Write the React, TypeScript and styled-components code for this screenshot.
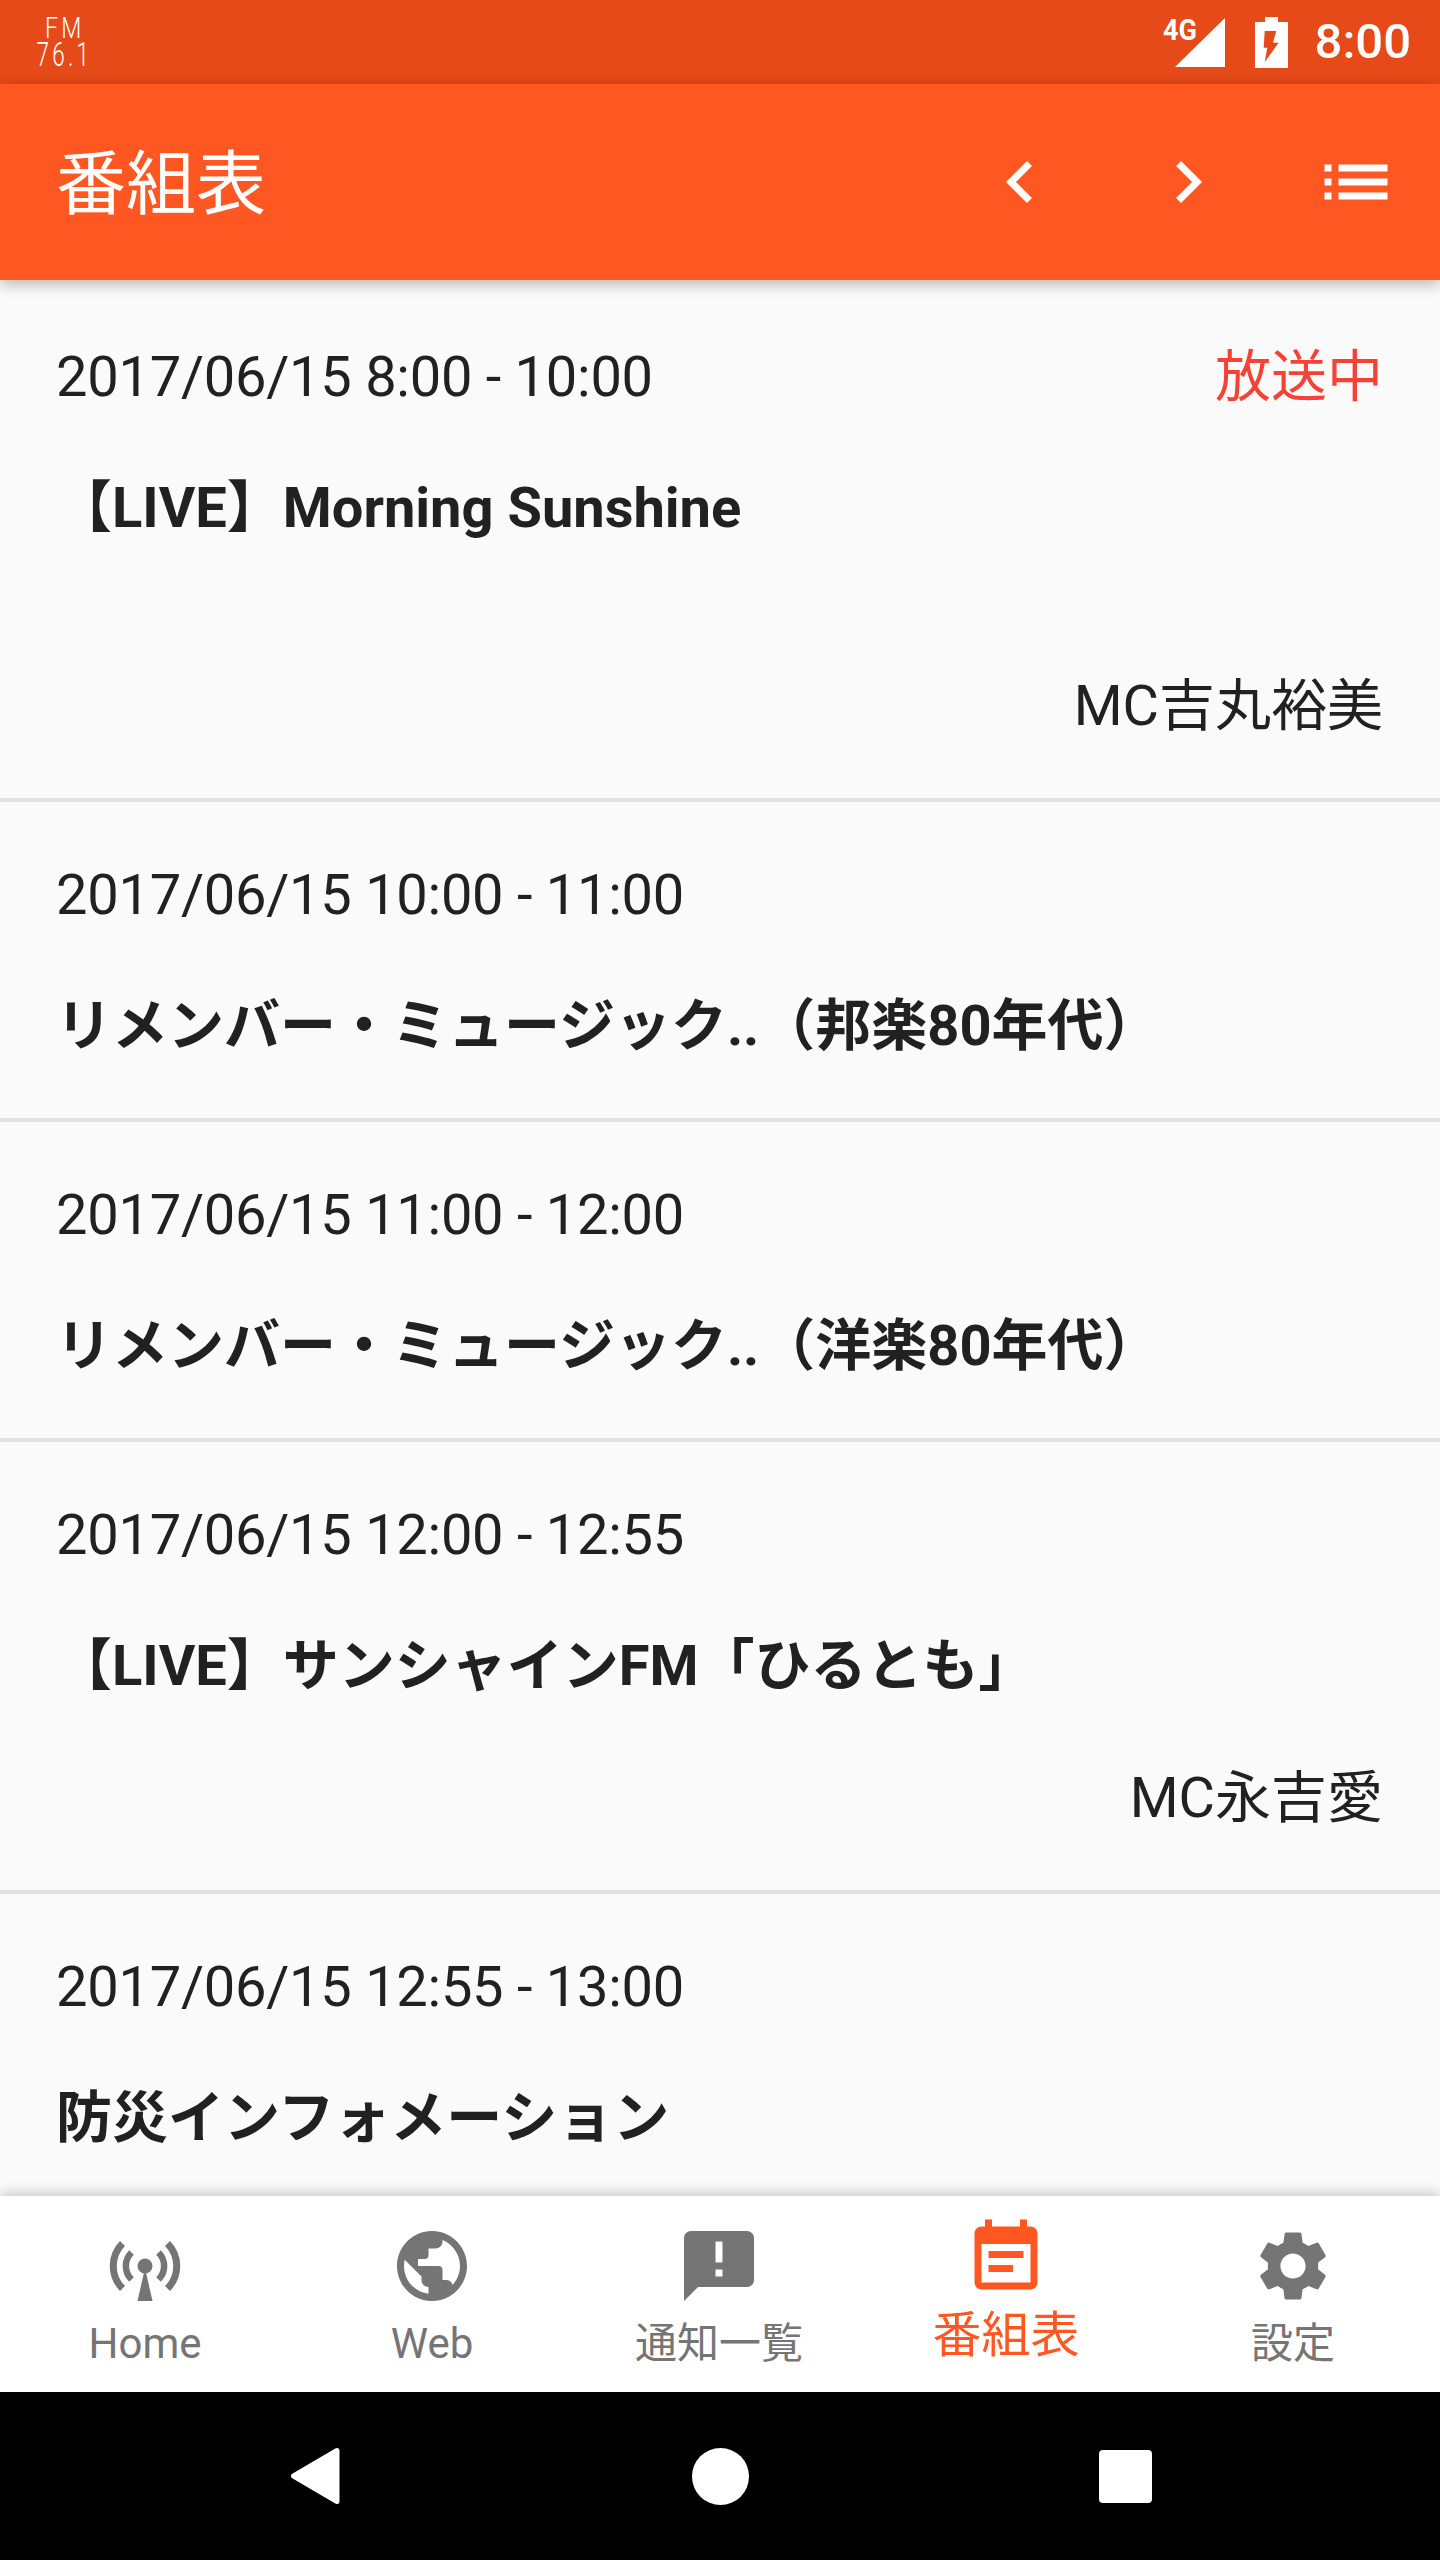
import React from "react";
import styled, { createGlobalStyle } from "styled-components";
import {
  MdAnnouncement,
  MdChevronLeft,
  MdChevronRight,
  MdEventNote,
  MdList,
  MdPublic,
  MdSettings,
} from "react-icons/md";

const GlobalStyle = createGlobalStyle`
  html, body {
    margin: 0;
    padding: 0;
    background: #000;
  }
  * {
    box-sizing: border-box;
  }
`;

const Screen = styled.div`
  width: 1440px;
  height: 2560px;
  display: flex;
  flex-direction: column;
  overflow: hidden;
  background: #fafafa;
  font-family: Roboto, "Noto Sans CJK JP", sans-serif;
  color: #212121;
`;

const StatusBar = styled.div`
  height: 84px;
  flex: none;
  display: flex;
  align-items: center;
  padding: 0 29px 0 39px;
  background: #e64a19;
  color: #fff;
`;

const FmBadge = styled.div`
  width: 51px;
  display: flex;
  flex-direction: column;
  align-items: center;
  font-family: Roboto, sans-serif;
  font-weight: 300;
`;

const FmTop = styled.span`
  font-size: 29px;
  line-height: 25px;
  letter-spacing: 4px;
  transform: scaleX(0.8);
`;

const FmBottom = styled.span`
  font-size: 34px;
  line-height: 27px;
  letter-spacing: 5px;
  white-space: nowrap;
  transform: scaleX(0.66);
`;

const StatusRight = styled.div`
  margin-left: auto;
  display: flex;
  align-items: center;
`;

const SignalWrap = styled.div`
  position: relative;
  width: 50px;
  height: 49px;
`;

const NetLabel = styled.span`
  position: absolute;
  left: -12px;
  top: -5px;
  font-size: 30px;
  line-height: 34px;
  font-weight: 700;
  transform: scaleX(0.9);
  transform-origin: left center;
`;

const Battery = styled.svg`
  width: 33px;
  height: 51px;
  margin-left: 30px;
  display: block;
`;

const Clock = styled.span`
  margin-left: 27px;
  font-size: 49px;
  font-weight: 500;
  line-height: 84px;
`;

const Toolbar = styled.header`
  position: relative;
  z-index: 2;
  height: 196px;
  flex: none;
  display: flex;
  align-items: center;
  padding-left: 56px;
  background: #ff5722;
  color: #fff;
  box-shadow: 0 4px 14px rgba(0, 0, 0, 0.28);
`;

const ToolbarTitle = styled.h1`
  margin: 6px 0 0;
  font-size: 70px;
  font-weight: 400;
  line-height: 190px;
`;

const ToolbarActions = styled.div`
  margin-left: auto;
  display: flex;
`;

const ActionButton = styled.div`
  width: 168px;
  height: 196px;
  display: flex;
  align-items: center;
  justify-content: center;
  font-size: 84px;
`;

const List = styled.main`
  flex: 1;
  min-height: 0;
  overflow: hidden;
`;

const Row = styled.section<{ $first?: boolean }>`
  padding: ${(p) => (p.$first ? "60px" : "56px")} 57px 59px 56px;
  border-bottom: 4px solid #e0e0e0;
`;

const RowHead = styled.div`
  display: flex;
  justify-content: space-between;
  align-items: center;
`;

const Time = styled.span`
  font-size: 56px;
  line-height: 74px;
  letter-spacing: -0.25px;
`;

const OnAir = styled.span`
  font-size: 56px;
  line-height: 74px;
  color: #f44336;
`;

const ProgramTitle = styled.div<{ $tall?: boolean }>`
  margin-top: 61px;
  min-height: ${(p) => (p.$tall ? "132px" : "66px")};
  font-size: 56px;
  line-height: 66px;
  font-weight: 700;
  white-space: nowrap;
`;

const Host = styled.div`
  margin-top: 66px;
  font-size: 56px;
  line-height: 66px;
  text-align: right;
`;

const TabBar = styled.nav`
  position: relative;
  z-index: 2;
  height: 196px;
  flex: none;
  display: grid;
  grid-template-columns: repeat(5, 287px);
  padding-left: 1.5px;
  background: #fff;
  box-shadow: 0 -3px 12px rgba(0, 0, 0, 0.2);
`;

const Tab = styled.div<{ $active?: boolean }>`
  display: flex;
  flex-direction: column;
  align-items: center;
  padding-top: ${(p) => (p.$active ? "20px" : "28px")};
  color: ${(p) => (p.$active ? "#ff5722" : "#757575")};
  font-size: 84px;
  line-height: 0;
`;

const TabLabel = styled.span<{ $active?: boolean }>`
  margin-top: 8px;
  font-size: ${(p) => (p.$active ? "49px" : "42px")};
  line-height: 56px;
  white-space: nowrap;
`;

const NavBar = styled.div`
  height: 168px;
  flex: none;
  display: grid;
  grid-template-columns: repeat(3, 405px);
  justify-content: center;
  align-items: center;
  justify-items: center;
  background: #000;
`;

const NavIcon = styled.svg`
  display: block;
`;

const HomeSquare = styled.div`
  width: 53px;
  height: 53px;
  border-radius: 4px;
  background: #fff;
`;

const HomeCircle = styled.div`
  width: 57px;
  height: 57px;
  border-radius: 50%;
  background: #fff;
`;

function TowerIcon() {
  return (
    <svg width="84" height="84" viewBox="0 0 84 84" fill="none">
      <circle cx="42" cy="42" r="7.5" fill="currentColor" />
      <path d="M42 44 L49.5 77 H34.5 Z" fill="currentColor" />
      <g stroke="currentColor">
        <path d="M28.5 28.5 A19 19 0 0 0 28.5 55.5" strokeWidth="6.5" />
        <path d="M55.5 28.5 A19 19 0 0 1 55.5 55.5" strokeWidth="6.5" />
        <path d="M19.5 19.5 A32 32 0 0 0 19.5 64.5" strokeWidth="7" />
        <path d="M64.5 19.5 A32 32 0 0 1 64.5 64.5" strokeWidth="7" />
      </g>
    </svg>
  );
}

const programs = [
  {
    time: "2017/06/15 8:00 - 10:00",
    title: "【LIVE】Morning Sunshine",
    host: "MC吉丸裕美",
    onAir: true,
    tall: true,
  },
  {
    time: "2017/06/15 10:00 - 11:00",
    title: "リメンバー・ミュージック..（邦楽80年代）",
  },
  {
    time: "2017/06/15 11:00 - 12:00",
    title: "リメンバー・ミュージック..（洋楽80年代）",
  },
  {
    time: "2017/06/15 12:00 - 12:55",
    title: "【LIVE】サンシャインFM「ひるとも」",
    host: "MC永吉愛",
  },
  {
    time: "2017/06/15 12:55 - 13:00",
    title: "防災インフォメーション",
  },
];

const tabs = [
  { label: "Home", icon: <TowerIcon /> },
  { label: "Web", icon: <MdPublic /> },
  { label: "通知一覧", icon: <MdAnnouncement /> },
  { label: "番組表", icon: <MdEventNote />, active: true },
  { label: "設定", icon: <MdSettings /> },
];

export default function App() {
  return (
    <Screen>
      <GlobalStyle />
      <StatusBar>
        <FmBadge>
          <FmTop>FM</FmTop>
          <FmBottom>76.1</FmBottom>
        </FmBadge>
        <StatusRight>
          <SignalWrap>
            <NetLabel>4G</NetLabel>
            <svg width="50" height="49" viewBox="0 0 50 49">
              <path d="M50 0V49H0Z" fill="#fff" />
            </svg>
          </SignalWrap>
          <Battery viewBox="0 0 33 51">
            <path
              fillRule="evenodd"
              fill="#fff"
              d="M10 0H23V5H33V51H0V5H10ZM9.7 14L8.7 30.7H12.3L9.7 45L23.7 25.7H18L21.3 14Z"
            />
          </Battery>
          <Clock>8:00</Clock>
        </StatusRight>
      </StatusBar>

      <Toolbar>
        <ToolbarTitle>番組表</ToolbarTitle>
        <ToolbarActions>
          <ActionButton>
            <MdChevronLeft />
          </ActionButton>
          <ActionButton>
            <MdChevronRight />
          </ActionButton>
          <ActionButton>
            <MdList />
          </ActionButton>
        </ToolbarActions>
      </Toolbar>

      <List>
        {programs.map((p, i) => (
          <Row key={p.time} $first={i === 0}>
            <RowHead>
              <Time>{p.time}</Time>
              {p.onAir && <OnAir>放送中</OnAir>}
            </RowHead>
            <ProgramTitle $tall={p.tall}>{p.title}</ProgramTitle>
            {p.host && <Host>{p.host}</Host>}
          </Row>
        ))}
      </List>

      <TabBar>
        {tabs.map((t) => (
          <Tab key={t.label} $active={t.active}>
            {t.icon}
            <TabLabel $active={t.active}>{t.label}</TabLabel>
          </Tab>
        ))}
      </TabBar>

      <NavBar>
        <NavIcon width="50" height="58" viewBox="0 0 50 58">
          <path
            d="M47 3.5V54.5L3.5 29Z"
            fill="#fff"
            stroke="#fff"
            strokeWidth="5"
            strokeLinejoin="round"
          />
        </NavIcon>
        <HomeCircle />
        <HomeSquare />
      </NavBar>
    </Screen>
  );
}
